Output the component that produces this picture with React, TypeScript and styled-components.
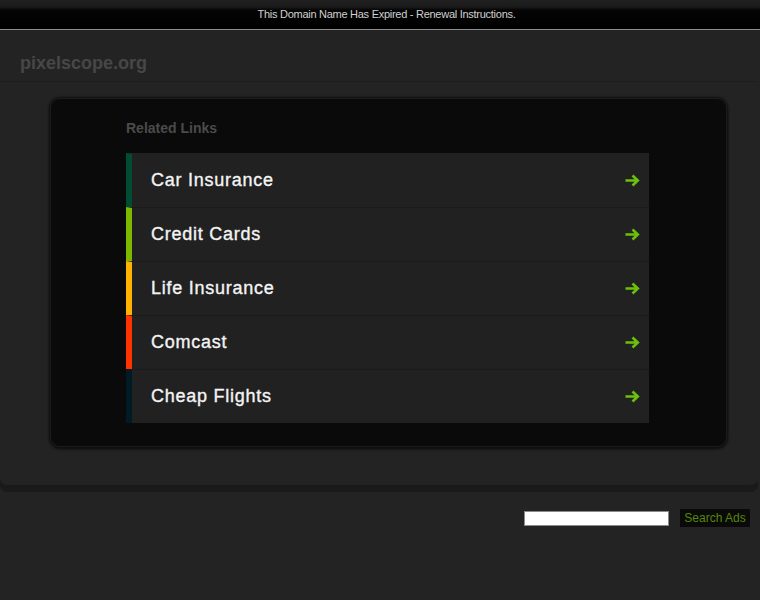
import styled, { createGlobalStyle } from "styled-components";

const GlobalStyle = createGlobalStyle`
  html, body {
    margin: 0;
    padding: 0;
    background: #232323;
    font-family: "Liberation Sans", Arial, sans-serif;
  }
`;

const links = [
  { label: "Car Insurance", color: "#014d33" },
  { label: "Credit Cards", color: "#7db800" },
  { label: "Life Insurance", color: "#ffb300" },
  { label: "Comcast", color: "#ff3300" },
  { label: "Cheap Flights", color: "#001a26" },
];

function Arrow() {
  return (
    <svg width="15" height="13" viewBox="0 0 15 13">
      <path
        d="M0.5 6.5 H12.5 M7.5 1.5 L12.8 6.5 L7.5 11.5"
        fill="none"
        stroke="#6cc00c"
        strokeWidth="2.6"
      />
    </svg>
  );
}

export default function App() {
  return (
    <>
      <GlobalStyle />
      <TopBar>This Domain Name Has Expired - Renewal Instructions.</TopBar>
      <Panel>
        <Header>pixelscope.org</Header>
        <Content>
          <LinksBox>
            <BoxTitle>Related Links</BoxTitle>
            <LinkList>
              {links.map((item) => (
                <LinkRow key={item.label} $bar={item.color}>
                  <span>{item.label}</span>
                  <Arrow />
                </LinkRow>
              ))}
            </LinkList>
          </LinksBox>
        </Content>
      </Panel>
      <SearchRow>
        <SearchInput type="text" />
        <SearchButton>Search Ads</SearchButton>
      </SearchRow>
    </>
  );
}

const TopBar = styled.div`
  height: 29px;
  padding-left: 13px;
  background: linear-gradient(#202020 0px, #1a1a1a 7px, #050505 10px, #000 29px);
  border-bottom: 1px solid #8c8c8c;
  color: #d0d0d0;
  font-size: 11px;
  letter-spacing: -0.27px;
  line-height: 29px;
  text-align: center;
`;

const Panel = styled.main`
  margin-right: 2px;
  background: #232323;
  border-radius: 0 0 7px 7px;
  box-shadow: 0 7px 0 #1a1a1a;
`;

const Header = styled.header`
  height: 52px;
  padding-left: 20px;
  border-bottom: 1px solid #1d1d1d;
  color: #474747;
  font-size: 18px;
  font-weight: bold;
  line-height: 66px;
  box-sizing: border-box;
`;

const Content = styled.div`
  padding: 16px 31px 38px 50px;
`;

const LinksBox = styled.section`
  height: 349px;
  box-sizing: border-box;
  padding: 21px 0 0 75px;
  background: #0a0a0a;
  border: 1px solid #1c1c1c;
  border-radius: 10px;
  box-shadow: 0 0 2px 1px #111, 0 2px 3px #0c0c0c;
`;

const BoxTitle = styled.h2`
  margin: 0 0 17px 0;
  color: #4b4b4b;
  font-size: 14px;
  font-weight: bold;
  line-height: 16px;
`;

const LinkList = styled.ul`
  width: 523px;
  margin: 0;
  padding: 0;
  list-style: none;
`;

const LinkRow = styled.li<{ $bar: string }>`
  display: flex;
  align-items: center;
  justify-content: space-between;
  height: 54px;
  box-sizing: border-box;
  padding: 0 9px 0 19px;
  background: #212121;
  border-left: 6px solid ${(p) => p.$bar};
  border-top: 1px solid #1b1b1b;
  color: #f4f4f4;
  font-size: 18px;
  letter-spacing: 0.75px;
  -webkit-text-stroke: 0.35px #f4f4f4;

  &:first-child {
    border-top-color: #212121;
  }

  svg {
    margin-bottom: 1px;
  }
`;

const SearchRow = styled.div`
  display: flex;
  justify-content: flex-end;
  align-items: center;
  gap: 11px;
  padding: 24px 10px 0 0;
`;

const SearchInput = styled.input`
  width: 145px;
  height: 15px;
  box-sizing: border-box;
  margin: 0;
  padding: 0 2px;
  border: 1px solid #8a8a8a;
  background: #fff;
`;

const SearchButton = styled.button`
  width: 70px;
  height: 18px;
  margin: 0;
  padding: 0;
  border: none;
  background: #0a0a0a;
  color: #55870a;
  font-family: "Liberation Sans", Arial, sans-serif;
  font-size: 12px;
`;
